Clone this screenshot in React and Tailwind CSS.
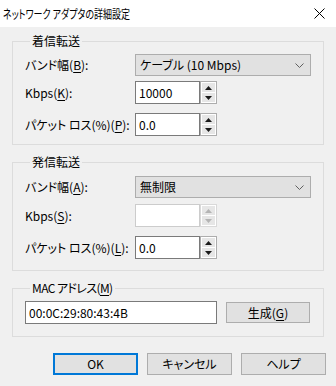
import React from 'react';

const font = { fontFamily: "'Noto Sans CJK JP', 'Noto Sans', sans-serif" };

const U = ({ children }) => <span className="underline underline-offset-2">{children}</span>;

const Spin = ({ disabled }) => {
  const tri = disabled ? '#b4b4b4' : '#1a1a1a';
  const border = disabled ? 'border-[#d9d9d9]' : 'border-[#adadad]';
  return (
    <div className={`w-[17px] h-[23px] border ${border} flex flex-col bg-[#e6e6e6]`}>
      {[0, 1].map(i => (
        <div key={i} className={`flex-1 flex items-center justify-center border border-white ${i ? 'border-t-0' : ''}`}>
          <svg width="7" height="4" viewBox="0 0 7 4">
            <polygon points={i ? '0,0 7,0 3.5,4' : '0,4 7,4 3.5,0'} fill={tri} />
          </svg>
        </div>
      ))}
    </div>
  );
};

const SpinBox = ({ value, disabled }) => (
  <div className="flex">
    <div className={`w-[65px] h-[23px] border ${disabled ? 'border-[#cccccc]' : 'border-[#7a7a7a]'} bg-white pl-[3px] flex items-center text-[12px] text-black`}>
      {value}
    </div>
    <Spin disabled={disabled} />
  </div>
);

const Combo = ({ value }) => (
  <div className="w-[176px] h-[22px] border border-[#adadad] bg-[#e1e1e1] flex items-center justify-between pl-[4px] pr-[6px] text-[12px] text-black">
    <span>{value}</span>
    <svg width="9" height="5" viewBox="0 0 9 5">
      <polyline points="0.5,0.5 4.5,4.5 8.5,0.5" fill="none" stroke="#606060" strokeWidth="1" />
    </svg>
  </div>
);

const Row = ({ label, children, className = '' }) => (
  <div className={`flex items-center ${className}`}>
    <div className="w-[110px] text-[12px] text-black">{label}</div>
    {children}
  </div>
);

const Group = ({ title, className = '', legend = '', children }) => (
  <fieldset className={`border border-[#dcdcdc] ${className}`}>
    <legend className={`ml-[5px] px-[2px] text-[12px] leading-[16px] text-black ${legend}`}>{title}</legend>
    {children}
  </fieldset>
);

const Btn = ({ children, def }) => (
  <div className={`w-[85px] h-[22px] flex items-center justify-center text-[12px] text-black bg-[#e1e1e1] ${def ? 'border-2 border-[#0078d7]' : 'border border-[#adadad]'}`}>
    {children}
  </div>
);

export default function App() {
  return (
    <div className="w-[336px] h-[386px] bg-[#f0f0f0] flex flex-col [font-feature-settings:'palt']" style={font}>
      <div className="h-[27px] bg-white flex items-center justify-between pl-[3px] pr-[11px] shrink-0">
        <span className="text-[12px] text-black whitespace-nowrap origin-left scale-x-[0.75]">ネットワーク アダプタの詳細設定</span>
        <svg width="11" height="11" viewBox="0 0 11 11">
          <path d="M0.5 0.5 L10.5 10.5 M10.5 0.5 L0.5 10.5" stroke="#000" strokeWidth="1" />
        </svg>
      </div>

      <div className="flex flex-col px-[12px] pt-[6px]">
        <Group title="着信転送" className="pl-[12px] pt-[5px] pb-[8px]">
          <Row label={<>バンド幅(<U>B</U>):</>}><Combo value="ケーブル (10 Mbps)" /></Row>
          <Row label={<>Kbps(<U>K</U>):</>} className="mt-[5px]"><SpinBox value="10000" /></Row>
          <Row label={<>パケット ロス(%)(<U>P</U>):</>} className="mt-[9px]"><SpinBox value="0.0" /></Row>
        </Group>

        <Group title="発信転送" className="mt-[9px] pl-[12px] pt-[6px] pb-[11px]">
          <Row label={<>バンド幅(<U>A</U>):</>}><Combo value="無制限" /></Row>
          <Row label={<>Kbps(<U>S</U>):</>} className="mt-[6px]"><SpinBox value="" disabled /></Row>
          <Row label={<>パケット ロス(%)(<U>L</U>):</>} className="mt-[9px]"><SpinBox value="0.0" /></Row>
        </Group>

        <Group title={<>MAC アドレス(<U>M</U>)</>} legend="tracking-[-0.6px]" className="mt-[9px] pl-[12px] pt-[5px] pb-[12px]">
          <div className="flex items-center">
            <div className="w-[192px] h-[23px] border border-[#7a7a7a] bg-white pl-[3px] flex items-center text-[12px] text-black">00:0C:29:80:43:4B</div>
            <div className="ml-[9px] w-[84px] h-[21px] border border-[#adadad] bg-[#e1e1e1] flex items-center justify-center text-[12px] text-black">
              生成(<U>G</U>)
            </div>
          </div>
        </Group>
      </div>

      <div className="flex justify-end gap-[9px] pr-[10px] mt-[16px]">
        <Btn def>OK</Btn>
        <Btn>キャンセル</Btn>
        <Btn>ヘルプ</Btn>
      </div>
    </div>
  );
}
